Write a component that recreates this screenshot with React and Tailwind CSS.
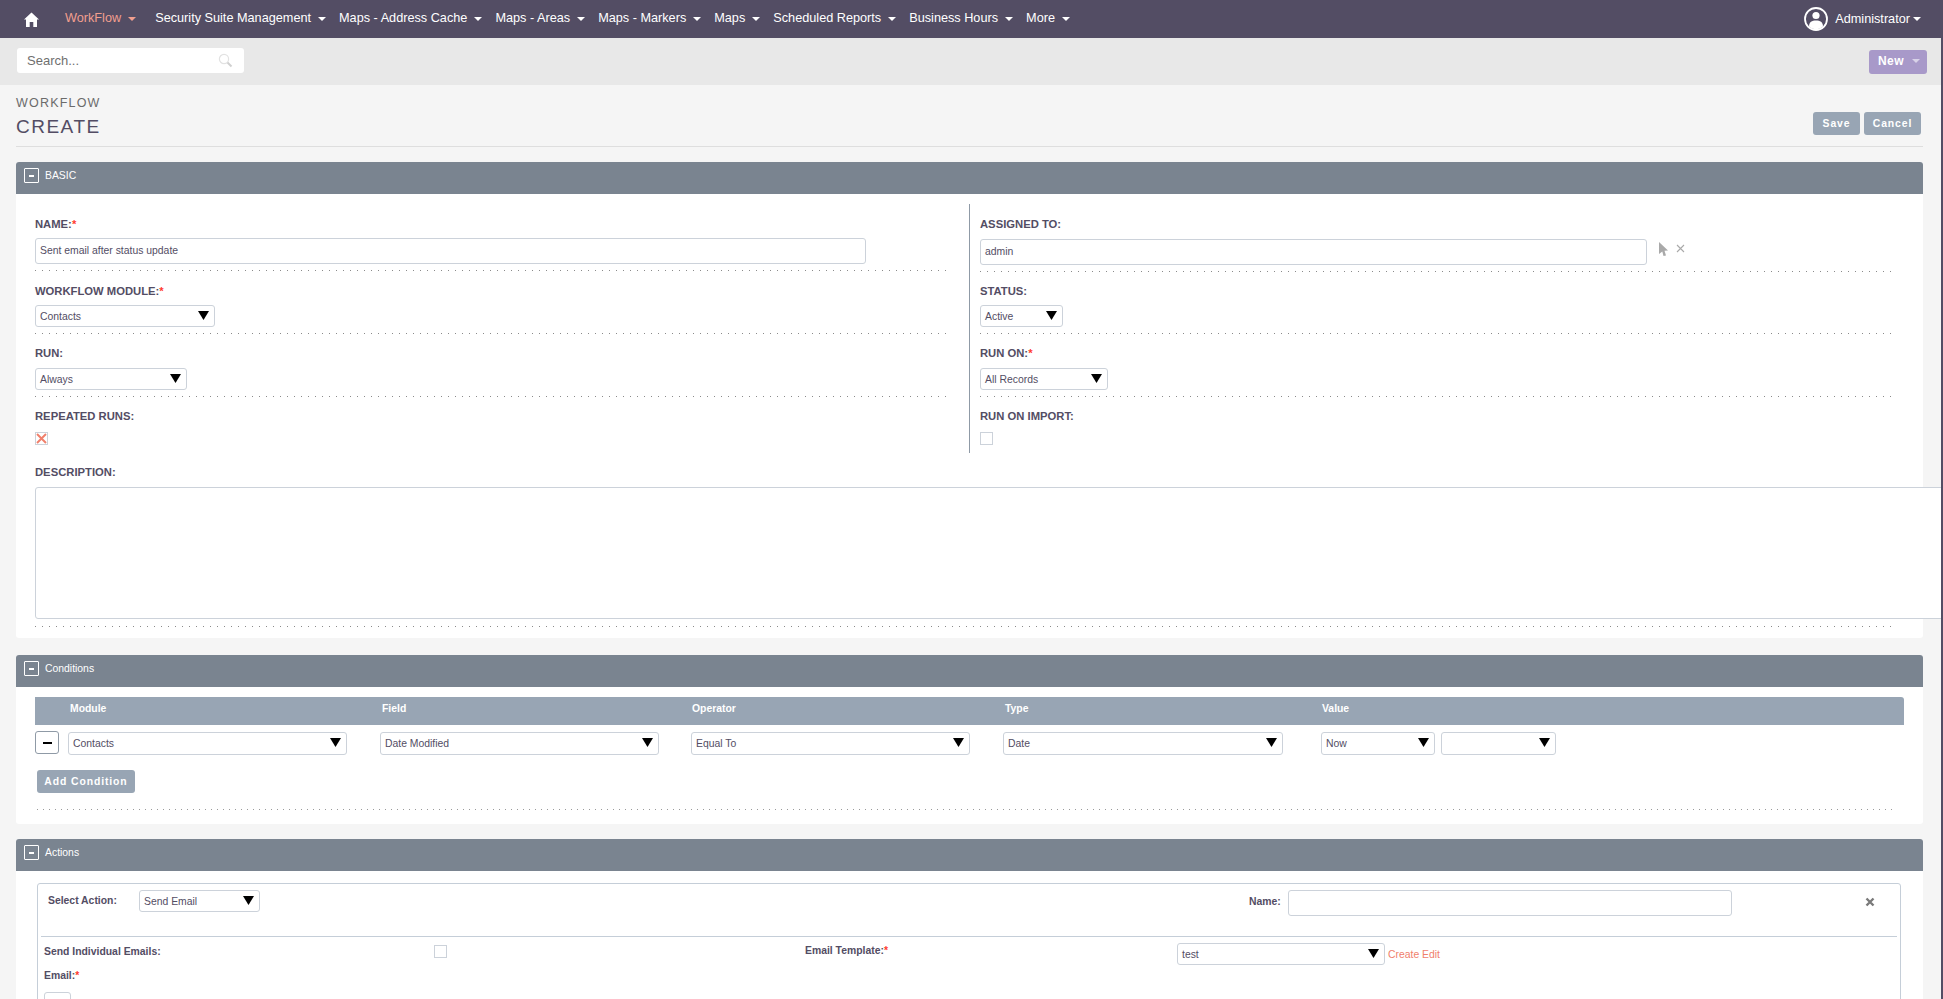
import React from "react";

const FONT = "font-['Liberation_Sans',Arial,sans-serif]";

function Caret({ className = "border-t-white" }) {
  return <span className={`inline-block w-0 h-0 border-x-[4px] border-x-transparent border-t-[4px] ${className}`} />;
}

function NavItem({ label, active, ml = "ml-[13px]" }) {
  return (
    <div className={`flex items-center gap-[7px] ${ml}`}>
      <span className={`text-[12.7px] leading-[36px] pb-[2px] ${active ? "text-[#f29f8f]" : "text-white"}`}>{label}</span>
      <Caret className={active ? "border-t-[#f29f8f]" : "border-t-white"} />
    </div>
  );
}

function Dots({ className = "", tight }) {
  return (
    <div
      className={`h-px bg-repeat-x ${tight ? "bg-[linear-gradient(to_right,#9a9a9a_1px,transparent_1px)] bg-[length:6px_1px]" : "bg-[linear-gradient(to_right,#8a8a8a_1px,transparent_1px)] bg-[length:7px_1px]"} ${className}`}
    />
  );
}

function Select({ value, className = "", h = "h-[22px]" }) {
  return (
    <div className={`${h} ${className} flex items-center justify-between shrink-0 bg-white border border-[#ccd2da] rounded-[3px] pl-[4px] pr-[5px] text-[10.4px] text-[#534d64]`}>
      <span className={h === "h-[22px]" ? "pt-[1px]" : ""}>{value}</span>
      <svg width="11" height="9" viewBox="0 0 11 9" className="shrink-0 -mt-[2px]"><path d="M0 0H11L5.5 9Z" fill="#000" /></svg>
    </div>
  );
}

function Input({ value, className = "" }) {
  return (
    <div className={`h-[26px] flex items-center bg-white border border-[#ccd2da] rounded-[3px] pl-[4px] text-[10.4px] text-[#534d64] ${className}`}>
      {value}
    </div>
  );
}

function Label({ children, req, className = "" }) {
  return (
    <div className={`h-[16px] leading-[16px] text-[11.25px] font-bold text-[#534d64] ${className}`}>
      {children}
      {req && <span className="text-[#ff3b2f]">*</span>}
    </div>
  );
}

function PanelHeader({ title }) {
  return (
    <div className="h-[32px] bg-[#7a8490] rounded-t-[3px] flex items-start pl-[8px] pt-[6px]">
      <div className="w-[15px] h-[15px] border border-white rounded-[1px] flex items-center justify-center">
        <span className="w-[5px] h-[2px] bg-white" />
      </div>
      <span className="ml-[6px] leading-[15px] text-[10.4px] text-white">{title}</span>
    </div>
  );
}

function Checkbox({ checked }) {
  return (
    <div className="w-[13px] h-[13px] border border-[#ccd2da] bg-white flex items-center justify-center">
      {checked && (
        <svg width="11" height="11" viewBox="0 0 11 11"><path d="M1 1L10 10M10 1L1 10" stroke="#f0806c" strokeWidth="2" /></svg>
      )}
    </div>
  );
}

function Btn({ children, className = "" }) {
  return (
    <div className={`h-[23px] flex items-center justify-center rounded-[3px] bg-[#98a5b4] text-white text-[10.4px] font-bold tracking-[0.9px] ${className}`}>
      {children}
    </div>
  );
}

function Th({ children, className }) {
  return <div className={`text-[10.4px] font-bold text-white ${className}`}>{children}</div>;
}

export default function App() {
  return (
    <div className={`h-[999px] overflow-hidden bg-[#534d64] ${FONT}`}>
      <div className="w-[1941px] h-[999px] overflow-hidden bg-[#f5f5f5]">
        {/* Top nav */}
        <div className="h-[38px] bg-[#534d64] flex items-center pl-[24px] pr-[20px]">
          <svg width="15" height="15" viewBox="0 0 15 15" className="shrink-0">
            <path d="M7.5 0.5L15 7.5H13V15H9.3V10H5.7V15H2V7.5H0Z" fill="#fff" />
          </svg>
          <NavItem label="WorkFlow" active ml="ml-[26px]" />
          <NavItem label="Security Suite Management" ml="ml-[19px]" />
          <NavItem label="Maps - Address Cache" />
          <NavItem label="Maps - Areas" />
          <NavItem label="Maps - Markers" />
          <NavItem label="Maps" />
          <NavItem label="Scheduled Reports" />
          <NavItem label="Business Hours" />
          <NavItem label="More" />
          <div className="ml-auto flex items-center">
            <svg width="24" height="24" viewBox="0 0 24 24" className="shrink-0">
              <circle cx="12" cy="12" r="11" fill="none" stroke="#fff" strokeWidth="1.8" />
              <circle cx="12" cy="8.5" r="3.6" fill="#fff" />
              <path d="M5 19.5C5 15 8 13.5 12 13.5S19 15 19 19.5C17 21.5 14.5 22.2 12 22.2S7 21.5 5 19.5Z" fill="#fff" />
            </svg>
            <span className="ml-[7px] pt-[1px] text-[12.7px] text-white">Administrator</span>
            <Caret className="border-t-white ml-[3px]" />
          </div>
        </div>

        {/* Search bar */}
        <div className="h-[47px] bg-[#e8e8e8] flex items-start justify-between pl-[17px] pr-[14px]">
          <div className="mt-[10px] w-[227px] h-[25px] bg-white rounded-[3px] flex items-center justify-between pl-[10px] pr-[11px]">
            <span className="text-[13px] text-[#6f6f6f]">Search...</span>
            <svg width="15" height="15" viewBox="0 0 15 15">
              <circle cx="6" cy="6" r="4.6" fill="none" stroke="#e2e2e2" strokeWidth="1.2" />
              <path d="M9.5 9.5L13.5 13.5" stroke="#d0d0d0" strokeWidth="2" />
            </svg>
          </div>
          <div className="mt-[12px] w-[58px] h-[24px] pb-[2px] pl-[2px] bg-[#a899c9] rounded-[3px] flex items-center justify-center gap-[8px] text-white text-[12px] font-bold tracking-[0.5px]">
            New <Caret className="border-t-[#d8d2e8]" />
          </div>
        </div>

        {/* Content */}
        <div className="pl-[16px] w-[1923px]">
          {/* Title */}
          <div className="h-[62px] border-b border-[#dedede] flex justify-between">
            <div>
              <div className="mt-[10px] h-[16px] leading-[16px] text-[12.5px] tracking-[1.2px] text-[#6b6b6b]">WORKFLOW</div>
              <div className="mt-[4px] h-[24px] leading-[24px] text-[19px] tracking-[1.5px] text-[#534d64]">CREATE</div>
            </div>
            <div className="flex gap-[4px] mt-[27px] mr-[2px]">
              <Btn className="w-[47px]">Save</Btn>
              <Btn className="w-[57px]">Cancel</Btn>
            </div>
          </div>

          {/* Basic */}
          <div className="mt-[15px] bg-white rounded-[3px] h-[476px]">
            <PanelHeader title="BASIC" />
            <div className="pl-[19px] pr-[32px] pt-[10px]">
              <div className="flex">
                <div className="w-[911px]">
                  <Label className="mt-[12px]" req>NAME:</Label>
                  <Input className="mt-[6px] w-[831px]" value="Sent email after status update" />
                  <Dots className="mt-[6px]" />
                  <Label className="mt-[12px]" req>WORKFLOW MODULE:</Label>
                  <Select className="mt-[6px] w-[180px]" value="Contacts" />
                  <Dots className="mt-[6px]" />
                  <Label className="mt-[11px]">RUN:</Label>
                  <Select className="mt-[7px] w-[152px]" value="Always" />
                  <Dots className="mt-[6px]" />
                  <Label className="mt-[11px]">REPEATED RUNS:</Label>
                  <div className="mt-[8px] mb-[8px]"><Checkbox checked /></div>
                </div>
                <div className="ml-[23px] pl-[10px] border-l border-[#8f9aa6] w-[922px]">
                  <Label className="mt-[12px]">ASSIGNED TO:</Label>
                  <div className="flex items-start mt-[7px]">
                    <Input className="w-[667px]" value="admin" />
                    <svg width="11" height="14" viewBox="0 0 11 14" className="ml-[11px] mt-[3px]">
                      <path d="M1 0L10 8.5L6.5 8.8L8 13.5L5.5 14L4.3 9.5L1 12Z" fill="#a9a9a9" />
                    </svg>
                    <svg width="9" height="9" viewBox="0 0 9 9" className="ml-[7px] mt-[5px]">
                      <path d="M1 1L8 8M8 1L1 8" stroke="#a9a9a9" strokeWidth="1.1" />
                    </svg>
                  </div>
                  <Dots className="mt-[6px]" />
                  <Label className="mt-[11px]">STATUS:</Label>
                  <Select className="mt-[6px] w-[83px]" value="Active" />
                  <Dots className="mt-[6px]" />
                  <Label className="mt-[11px]" req>RUN ON:</Label>
                  <Select className="mt-[7px] w-[128px]" value="All Records" />
                  <Dots className="mt-[6px]" />
                  <Label className="mt-[11px]">RUN ON IMPORT:</Label>
                  <div className="mt-[8px] mb-[8px]"><Checkbox /></div>
                </div>
              </div>
              <Label className="mt-[11px]">DESCRIPTION:</Label>
              <div className="mt-[7px] w-[1940px] h-[132px] bg-white border border-[#ccd2da] rounded-[3px]" />
              <Dots className="mt-[7px] -mr-[5px]" />
            </div>
          </div>

          {/* Conditions */}
          <div className="mt-[17px] bg-white rounded-[3px] h-[169px]">
            <PanelHeader title="Conditions" />
            <div className="pl-[19px] pr-[19px] pt-[10px]">
              <div className="h-[28px] pb-[4px] bg-[#98a5b4] rounded-tr-[3px] flex items-center">
                <Th className="ml-[35px] w-[312px]">Module</Th>
                <Th className="w-[310px]">Field</Th>
                <Th className="w-[313px]">Operator</Th>
                <Th className="w-[317px]">Type</Th>
                <Th>Value</Th>
              </div>
              <div className="flex mt-[6px] items-start">
                <div className="w-[24px] h-[23px] bg-white border border-[#8f9aa6] rounded-[3px] flex items-center justify-center">
                  <span className="w-[9px] h-[2px] bg-black" />
                </div>
                <Select h="h-[23px]" className="ml-[9px] w-[279px] mt-[1px]" value="Contacts" />
                <Select h="h-[23px]" className="ml-[33px] w-[279px] mt-[1px]" value="Date Modified" />
                <Select h="h-[23px]" className="ml-[32px] w-[279px] mt-[1px]" value="Equal To" />
                <Select h="h-[23px]" className="ml-[33px] w-[280px] mt-[1px]" value="Date" />
                <Select h="h-[23px]" className="ml-[38px] w-[114px] mt-[1px]" value="Now" />
                <Select h="h-[23px]" className="ml-[6px] w-[115px] mt-[1px]" value="" />
              </div>
              <Btn className="mt-[15px] ml-[2px] w-[98px]">Add Condition</Btn>
              <Dots tight className="mt-[16px] ml-[2px] mr-[8px]" />
            </div>
          </div>

          {/* Actions */}
          <div className="mt-[15px] bg-white rounded-[3px] h-[200px]">
            <PanelHeader title="Actions" />
            <div className="ml-[21px] mt-[12px] w-[1864px] h-[140px] border border-[#c5ced8] rounded-[3px]">
              <div className="h-[52px] flex items-start pt-[6px]">
                <span className="ml-[10px] mt-[3px] w-[91px] text-[10.4px] font-bold text-[#534d64]">Select Action:</span>
                <Select value="Send Email" className="w-[121px]" />
                <span className="ml-[989px] mt-[4px] w-[32px] text-[10.4px] font-bold text-[#534d64]">Name:</span>
                <div className="ml-[7px] w-[444px] h-[26px] bg-white border border-[#ccd2da] rounded-[3px]" />
                <svg width="10" height="10" viewBox="0 0 10 10" className="ml-[133px] mt-[7px]">
                  <path d="M1.5 1.5L8.5 8.5M8.5 1.5L1.5 8.5" stroke="#7a7a7a" strokeWidth="2.4" />
                </svg>
              </div>
              <div className="mx-[3px] border-t border-[#c5ced8]" />
              <div className="flex items-start">
                <div className="w-[767px] pl-[6px] pt-[8px]">
                  <div className="flex items-start">
                    <span className="w-[390px] leading-[13px] text-[10.4px] font-bold text-[#534d64]">Send Individual Emails:</span>
                    <Checkbox />
                  </div>
                  <div className="mt-[11px] leading-[13px] text-[10.4px] font-bold text-[#534d64]">Email:<span className="text-[#ff3b2f]">*</span></div>
                  <div className="mt-[10px] w-[27px] h-[20px] border border-[#ccd2da] rounded-[3px]" />
                </div>
                <div className="pt-[7px] w-[372px] leading-[13px] text-[10.4px] font-bold text-[#534d64]">Email Template:<span className="text-[#ff3b2f]">*</span></div>
                <Select value="test" className="w-[208px] mt-[6px]" />
                <span className="ml-[3px] mt-[11px] leading-[13px] text-[10.4px] text-[#f0806c]">Create Edit</span>
              </div>
            </div>
          </div>
        </div>
      </div>
    </div>
  );
}
